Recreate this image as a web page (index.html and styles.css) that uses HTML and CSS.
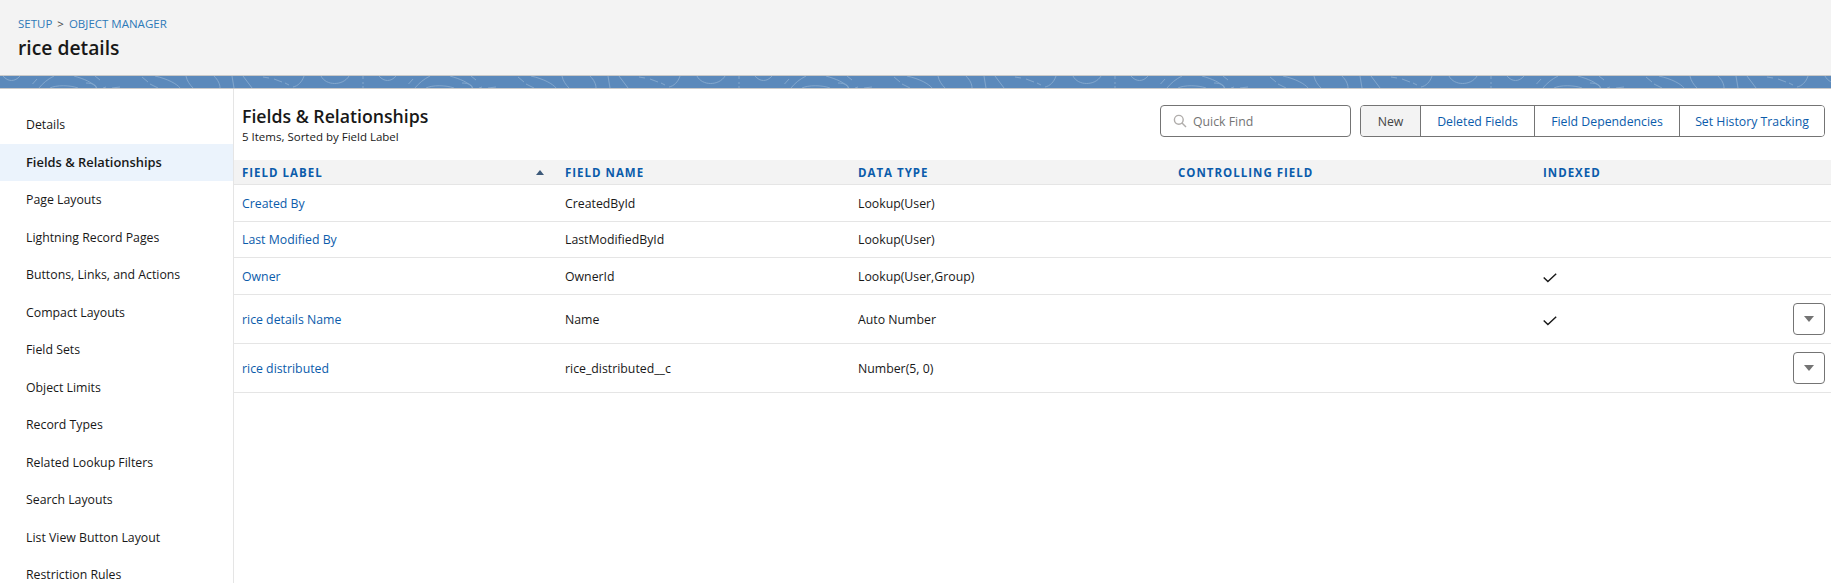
FILE: index.html
```html
<!DOCTYPE html>
<html lang="en">
<head>
    <meta charset="UTF-8">
    <meta name="viewport" content="width=device-width, initial-scale=1.0">
    <title>rice details | Object Manager</title>
    <link rel="stylesheet" href="styles.css">
</head>
<body>
    <header class="page-header">
        <div class="breadcrumb"><a href="#">SETUP</a> <span class="sep">&gt;</span> <a href="#">OBJECT MANAGER</a></div>
        <h1>rice details</h1>
    </header>
    <svg class="band" width="1831" height="12" viewBox="0 0 1831 12">
        <defs>
            <pattern id="swirl" width="376" height="12" patternUnits="userSpaceOnUse">
                <path fill="none" stroke="#83a7cd" stroke-width="1" d="M3 0C8 6 15 6 20 0M32.500 8L37 3M39 12C43 7 48 3 54 0M74 0C84 3 92 6 97 12M50 12C56 9 70 9 78 12M86 7C92 7 97 9 96 12M95 0L100 4M103 12L106 11M112 12L120 11M142 1L148 6M155 0C168 3 177 8 180 12M150 8L158 12M186 0C187 5 190 9 193 12M214 0C218 4 220 8 220 12M232 0L234 12M243 0L252 12M263 1L269 2M274 3L282 6M285 7L289 9M293 11C298 10 302 6 304 0M321 0C326 10 343 10 349 0M363 0V3M363 6V8M363 10V12"/>
            </pattern>
        </defs>
        <rect width="1831" height="12" fill="#5b89bb"/>
        <rect width="1831" height="12" fill="url(#swirl)"/>
    </svg>
    <div class="layout">
        <nav class="sidebar">
            <a class="nav-item" href="#">Details</a>
            <a class="nav-item active" href="#">Fields &amp; Relationships</a>
            <a class="nav-item" href="#">Page Layouts</a>
            <a class="nav-item" href="#">Lightning Record Pages</a>
            <a class="nav-item" href="#">Buttons, Links, and Actions</a>
            <a class="nav-item" href="#">Compact Layouts</a>
            <a class="nav-item" href="#">Field Sets</a>
            <a class="nav-item" href="#">Object Limits</a>
            <a class="nav-item" href="#">Record Types</a>
            <a class="nav-item" href="#">Related Lookup Filters</a>
            <a class="nav-item" href="#">Search Layouts</a>
            <a class="nav-item" href="#">List View Button Layout</a>
            <a class="nav-item" href="#">Restriction Rules</a>
        </nav>
        <main class="content">
            <div class="toolbar">
                <div class="title-block">
                    <h2>Fields &amp; Relationships</h2>
                    <p>5 Items, Sorted by Field Label</p>
                </div>
                <label class="quick-find">
                    <svg width="14" height="14" viewBox="0 0 14 14" fill="none" stroke="#b0adab" stroke-width="1.4">
                        <circle cx="5.8" cy="5.8" r="4.4"/>
                        <path d="M9 9l4 4"/>
                    </svg>
                    <input type="text" placeholder="Quick Find">
                </label>
                <div class="button-group">
                    <button class="btn btn-new">New</button>
                    <button class="btn btn-deleted">Deleted Fields</button>
                    <button class="btn btn-deps">Field Dependencies</button>
                    <button class="btn btn-history">Set History Tracking</button>
                </div>
            </div>
            <table class="fields">
                <thead>
                    <tr>
                        <th class="col-label">Field Label<span class="sort-arrow"></span></th>
                        <th class="col-name">Field Name</th>
                        <th class="col-type">Data Type</th>
                        <th class="col-control">Controlling Field</th>
                        <th>Indexed</th>
                        <th class="col-menu"></th>
                    </tr>
                </thead>
                <tbody>
                    <tr>
                        <td><a href="#">Created By</a></td>
                        <td>CreatedById</td>
                        <td>Lookup(User)</td>
                        <td></td>
                        <td></td>
                        <td></td>
                    </tr>
                    <tr class="row-short">
                        <td><a href="#">Last Modified By</a></td>
                        <td>LastModifiedById</td>
                        <td>Lookup(User)</td>
                        <td></td>
                        <td></td>
                        <td></td>
                    </tr>
                    <tr>
                        <td><a href="#">Owner</a></td>
                        <td>OwnerId</td>
                        <td>Lookup(User,Group)</td>
                        <td></td>
                        <td>
                            <svg class="check" width="14" height="10" viewBox="0 0 14 10" fill="none" stroke="#181818" stroke-width="1.4"><path d="M.7 4.400l4.200 4.200L13.200.8"/></svg>
                        </td>
                        <td></td>
                    </tr>
                    <tr class="row-tall">
                        <td><a href="#">rice details Name</a></td>
                        <td>Name</td>
                        <td>Auto Number</td>
                        <td></td>
                        <td>
                            <svg class="check" width="14" height="10" viewBox="0 0 14 10" fill="none" stroke="#181818" stroke-width="1.4"><path d="M.7 4.400l4.200 4.200L13.200.8"/></svg>
                        </td>
                        <td class="col-menu"><button class="menu-btn"><span class="menu-arrow"></span></button></td>
                    </tr>
                    <tr class="row-tall">
                        <td><a href="#">rice distributed</a></td>
                        <td>rice_distributed__c</td>
                        <td>Number(5, 0)</td>
                        <td></td>
                        <td></td>
                        <td class="col-menu"><button class="menu-btn"><span class="menu-arrow"></span></button></td>
                    </tr>
                </tbody>
            </table>
        </main>
    </div>
</body>
</html>
```

FILE: styles.css
```css
* {
    box-sizing: border-box;
}
html, body {
    height: 100%;
    overflow: hidden;
}
body {
    margin: 0;
    font-family: "Open Sans", "Noto Sans", sans-serif;
    font-size: 12.3px;
    color: #181818;
    background-color: #ffffff;
}
a {
    color: #0b5cab;
    text-decoration: none;
}
.page-header {
    height: 76px;
    padding: 15px 18px 0;
    background-color: #f3f3f3;
    border-bottom: 1px solid #c9c9c9;
}
.breadcrumb {
    font-size: 11.5px;
    line-height: 18px;
    color: #444;
}
.breadcrumb a {
    color: #2e7ab8;
}
.sep {
    margin: 0 2px;
}
h1 {
    margin: 2px 0 0;
    font-size: 19.3px;
    line-height: 26px;
    font-weight: 600;
}
.band {
    display: block;
}
.layout {
    display: flex;
    height: 495px;
    border-top: 1px solid #c9c9c9;
}
.sidebar {
    flex: 0 0 234px;
    padding-top: 17px;
    border-right: 1px solid #e5e5e5;
}
.nav-item {
    display: block;
    height: 37.5px;
    padding-left: 26px;
    line-height: 37.5px;
    color: #181818;
}
.nav-item.active {
    font-size: 12.9px;
    font-weight: 600;
    background-color: #ebf3fc;
}
.content {
    flex: 1;
    min-width: 0;
}
.toolbar {
    display: flex;
    align-items: flex-start;
    height: 71px;
    padding: 16px 6px 0 8px;
}
.title-block {
    flex: 1;
}
h2 {
    margin: -1px 0 0;
    font-size: 17.7px;
    line-height: 25px;
    font-weight: 600;
}
.title-block p {
    margin: 0;
    font-size: 11.5px;
    line-height: 15px;
}
.quick-find {
    display: flex;
    align-items: center;
    gap: 6px;
    width: 191px;
    height: 32px;
    padding-left: 12px;
    border: 1px solid #747474;
    border-radius: 4px;
}
.quick-find input {
    flex: 1;
    min-width: 0;
    border: none;
    outline: none;
    padding: 0;
    font: inherit;
}
.quick-find input::placeholder {
    color: #747474;
    opacity: 1;
}
.button-group {
    display: flex;
    height: 32px;
    margin-left: 9px;
    border: 1px solid #747474;
    border-radius: 4px;
    overflow: hidden;
}
.btn {
    padding: 0;
    border: none;
    border-left: 1px solid #747474;
    background-color: #ffffff;
    font: inherit;
    color: #0b5cab;
}
.btn-new {
    width: 59px;
    border-left: none;
    background-color: #f3f3f3;
    color: #444;
}
.btn-deleted {
    width: 114px;
}
.btn-deps {
    width: 145px;
}
.btn-history {
    width: 145px;
}
.fields {
    width: 100%;
    border-collapse: separate;
    border-spacing: 0;
    table-layout: fixed;
}
.fields th {
    height: 25px;
    padding: 0 0 0 8px;
    text-align: left;
    font-size: 11.5px;
    font-weight: 700;
    letter-spacing: 1px;
    text-transform: uppercase;
    color: #0b5cab;
    background-color: #f3f3f3;
    border-bottom: 1px solid #e5e5e5;
}
.fields td {
    height: 37px;
    padding: 0 0 0 8px;
    border-bottom: 1px solid #e5e5e5;
}
.fields .row-short td {
    height: 36px;
}
.fields .row-tall td {
    height: 49px;
}
.col-label {
    position: relative;
    width: 323px;
}
.col-name {
    width: 293px;
}
.col-type {
    width: 320px;
}
.col-control {
    width: 365px;
}
.fields .col-menu {
    width: 53px;
    padding: 0;
}
.sort-arrow {
    position: absolute;
    top: 10px;
    right: 13px;
    border-left: 4px solid transparent;
    border-right: 4px solid transparent;
    border-bottom: 5px solid #3e5a7a;
}
.check {
    display: block;
    margin-top: 3px;
}
.menu-btn {
    display: flex;
    align-items: center;
    justify-content: center;
    width: 32px;
    height: 32px;
    margin-left: 15px;
    padding: 0;
    background-color: #ffffff;
    border: 1px solid #747474;
    border-radius: 4px;
}
.menu-arrow {
    border-left: 5px solid transparent;
    border-right: 5px solid transparent;
    border-top: 6px solid #747474;
}
```
